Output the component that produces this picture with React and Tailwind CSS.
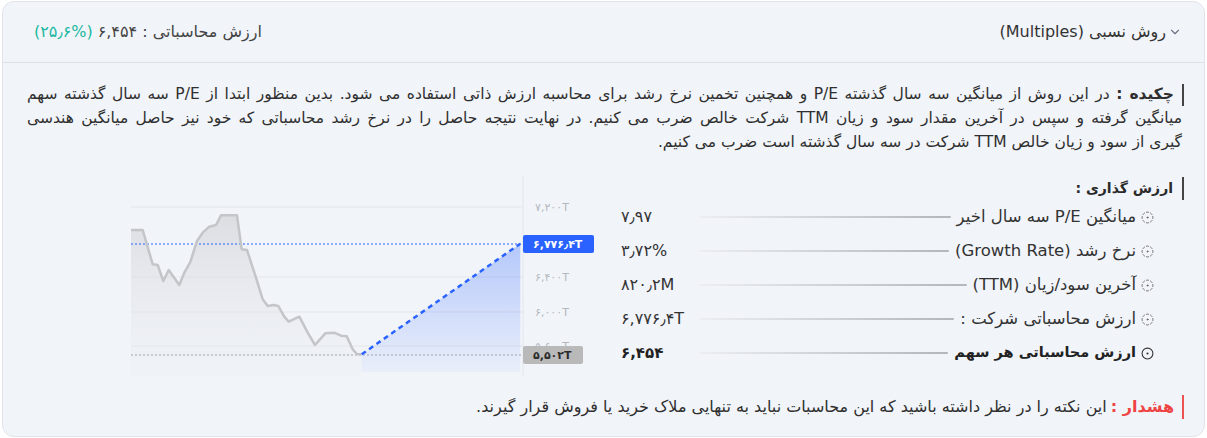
import React from "react";
import { ChevronDown, CircleDotDashed, CircleDot } from "lucide-react";

const grayPoints = [
  [0, 54], [11.7, 54], [21.7, 88.3], [26.7, 89], [32.3, 105], [37.7, 94], [48.3, 109],
  [53.3, 96.7], [59.3, 86], [66, 65], [71.7, 56.7], [78.3, 50.7], [85, 49], [90, 39.3],
  [106, 39.3], [110.7, 73.3], [116, 74], [125, 101.7], [131.7, 123.3], [136.7, 130],
  [142.7, 129], [147.3, 130], [153.3, 140.7], [157.7, 145.7], [168.3, 140.7], [176.7, 156.7],
  [184, 169], [194.3, 157.3], [203.3, 156.7], [210, 159.7], [215.7, 160.3], [221.7, 173.3],
  [226, 178], [230.7, 178.3],
];

const rows = [
  { label: "میانگین P/E سه سال اخیر", value: "۷٫۹۷" },
  { label: "نرخ رشد (Growth Rate)", value: "۳٫۷۲%" },
  { label: "آخرین سود/زیان (TTM)", value: "۸۲۰٫۲M" },
  { label: "ارزش محاسباتی شرکت :", value: "۶,۷۷۶٫۴T" },
  { label: "ارزش محاسباتی هر سهم", value: "۶,۴۵۴", bold: true },
];

function PriceChart() {
  const line = grayPoints.map(p => p.join(",")).join(" ");
  const area = `${line} 230.7,200 0,200`;
  const axisLabels = [
    { y: 31, text: "۷,۲۰۰T" },
    { y: 101, text: "۶,۴۰۰T" },
    { y: 136, text: "۶,۰۰۰T" },
    { y: 170, text: "۵,۶۰۰T" },
  ];

  return (
    <svg width="470" height="200" viewBox="0 0 470 200" className="block [direction:ltr]">
      <defs>
        <linearGradient id="grayFill" x1="0" y1="0" x2="0" y2="1">
          <stop offset="0%" stopColor="#d4d6da" stopOpacity="0.75" />
          <stop offset="100%" stopColor="#e9ecf1" stopOpacity="0.2" />
        </linearGradient>
        <linearGradient id="blueFill" x1="0" y1="0" x2="0" y2="1">
          <stop offset="0%" stopColor="#2962ff" stopOpacity="0.3" />
          <stop offset="100%" stopColor="#2962ff" stopOpacity="0.04" />
        </linearGradient>
      </defs>

      {/* grid */}
      {[31, 101, 136, 170].map(y => (
        <line key={y} x1="0" x2="392" y1={y} y2={y} stroke="#e3e6eb" strokeWidth="1" />
      ))}

      <polygon points={area} fill="url(#grayFill)" />
      <polygon points="230.7,178.3 389.3,67.7 389.3,196 230.7,196" fill="url(#blueFill)" />

      <line x1="0" x2="392" y1="68" y2="68" stroke="#2962ff" strokeWidth="1" strokeDasharray="2 2" />
      <line x1="0" x2="392" y1="179" y2="179" stroke="#9ca3af" strokeWidth="1" strokeDasharray="2 2" />

      <polyline points={line} fill="none" stroke="#c4c5c8" strokeWidth="2.5" strokeLinejoin="round" />
      <line x1="230.7" y1="178.3" x2="389.3" y2="67.7" stroke="#2962ff" strokeWidth="2.5" strokeDasharray="5 4" />

      {/* price axis */}
      <line x1="392" x2="392" y1="0" y2="200" stroke="#e3e6eb" strokeWidth="1" />
      {axisLabels.map(l => (
        <text key={l.y} x="404" y={l.y + 4} direction="ltr" fontSize="11" fill="#b4b7be" fontFamily="DejaVu Sans, sans-serif">
          {l.text}
        </text>
      ))}
      <rect x="392" y="59" width="71" height="18" rx="2" fill="#2962ff" />
      <text x="402" y="72" direction="ltr" fontSize="11" fontWeight="700" fill="#ffffff" fontFamily="DejaVu Sans, sans-serif">
        ۶,۷۷۶٫۴T
      </text>
      <rect x="392" y="170" width="60" height="18" rx="2" fill="#b9b9b9" />
      <text x="402" y="183" direction="ltr" fontSize="11" fontWeight="700" fill="#2b2b2b" fontFamily="DejaVu Sans, sans-serif">
        ۵,۵۰۲T
      </text>
    </svg>
  );
}

export default function App() {
  return (
    <div dir="rtl" className="bg-white px-[2px] py-[1px] font-['DejaVu_Sans',sans-serif] text-[#333]">
      <div className="h-[436px] rounded-xl border border-[#e0e4ea] bg-[#f1f4f9] overflow-hidden">
        {/* Header */}
        <div className="flex h-[61px] items-center justify-between border-b border-[#dde1e7] pr-[22px] pl-[31px]">
          <div className="flex items-center gap-[2px] text-[16px] text-[#333]">
            <ChevronDown size={14} className="text-gray-500" />
            <span>روش نسبی (Multiples)</span>
          </div>
          <div className="flex items-center gap-[5px] text-[16px] text-[#444]">
            <span>ارزش محاسباتی :</span>
            <span dir="ltr">۶,۴۵۴</span>
            <span dir="ltr" className="text-[#20b8a0]">(۲۵٫۶%)</span>
          </div>
        </div>

        {/* Body */}
        <div className="pr-[22px] pl-[24px] pt-[19px]">
          {/* Summary */}
          <div className="text-[15.5px] leading-[24px] text-[#2f2f2f]">
            <div className="text-justify [text-align-last:justify] whitespace-nowrap">
              <span className="inline-block w-[2px] h-[22px] bg-[#444] align-middle ml-[8px] -mr-[2px]" />
              <span className="font-bold">چکیده :</span> در این روش از میانگین سه سال گذشته P/E و همچنین تخمین نرخ رشد برای محاسبه ارزش ذاتی استفاده می شود. بدین منظور ابتدا از P/E سه سال گذشته سهم
            </div>
            <div className="text-justify [text-align-last:justify] whitespace-nowrap">
              میانگین گرفته و سپس در آخرین مقدار سود و زیان TTM شرکت خالص ضرب می کنیم. در نهایت نتیجه حاصل را در نرخ رشد محاسباتی که خود نیز حاصل میانگین هندسی
            </div>
            <div>
              گیری از سود و زیان خالص TTM شرکت در سه سال گذشته است ضرب می کنیم.
            </div>
          </div>

          {/* Valuation + chart */}
          <div className="mt-[22px] flex">
            <div className="w-[561px] shrink-0">
              <div className="flex h-[24px] items-center">
                <div className="h-[23px] w-[2px] bg-[#444] -mr-[2px]" />
                <span className="mr-[9px] text-[14px] font-bold text-[#2a2a2a]">ارزش گذاری :</span>
              </div>
              {rows.map(r => (
                <div key={r.label} className="flex h-[34px] items-center pr-[28px]">
                  {r.bold ? (
                    <CircleDot size={13} strokeWidth={2} className="text-[#333] shrink-0" />
                  ) : (
                    <CircleDotDashed size={13} strokeWidth={1.5} className="text-[#555] shrink-0" />
                  )}
                  <span className={`mr-[5px] whitespace-nowrap ${r.bold ? "text-[14.5px] font-bold text-[#222]" : "text-[16.5px] text-[#333]"}`}>
                    {r.label}
                  </span>
                  <div className="mx-[6px] h-[2px] flex-1 rounded-full bg-linear-to-l from-[#b3b7bd] to-[#eceef2]" />
                  <span dir="ltr" className={`w-[72px] text-left ${r.bold ? "text-[15px] font-bold text-[#222]" : "text-[16px] text-[#333]"}`}>
                    {r.value}
                  </span>
                </div>
              ))}
            </div>
            <div className="flex flex-1 justify-end pl-[104px]">
              <PriceChart />
            </div>
          </div>

          {/* Warning */}
          <div className="mt-[19px] flex h-[24px] items-center text-[16px]">
            <div className="h-[24px] w-[2px] bg-[#ef5350] -mr-[2px]" />
            <span className="mr-[8px] font-bold text-[#ef4444]">هشدار :</span>
            <span className="mr-[4px] text-[#2f2f2f]">این نکته را در نظر داشته باشید که این محاسبات نباید به تنهایی ملاک خرید یا فروش قرار گیرند.</span>
          </div>
        </div>
      </div>
    </div>
  );
}
